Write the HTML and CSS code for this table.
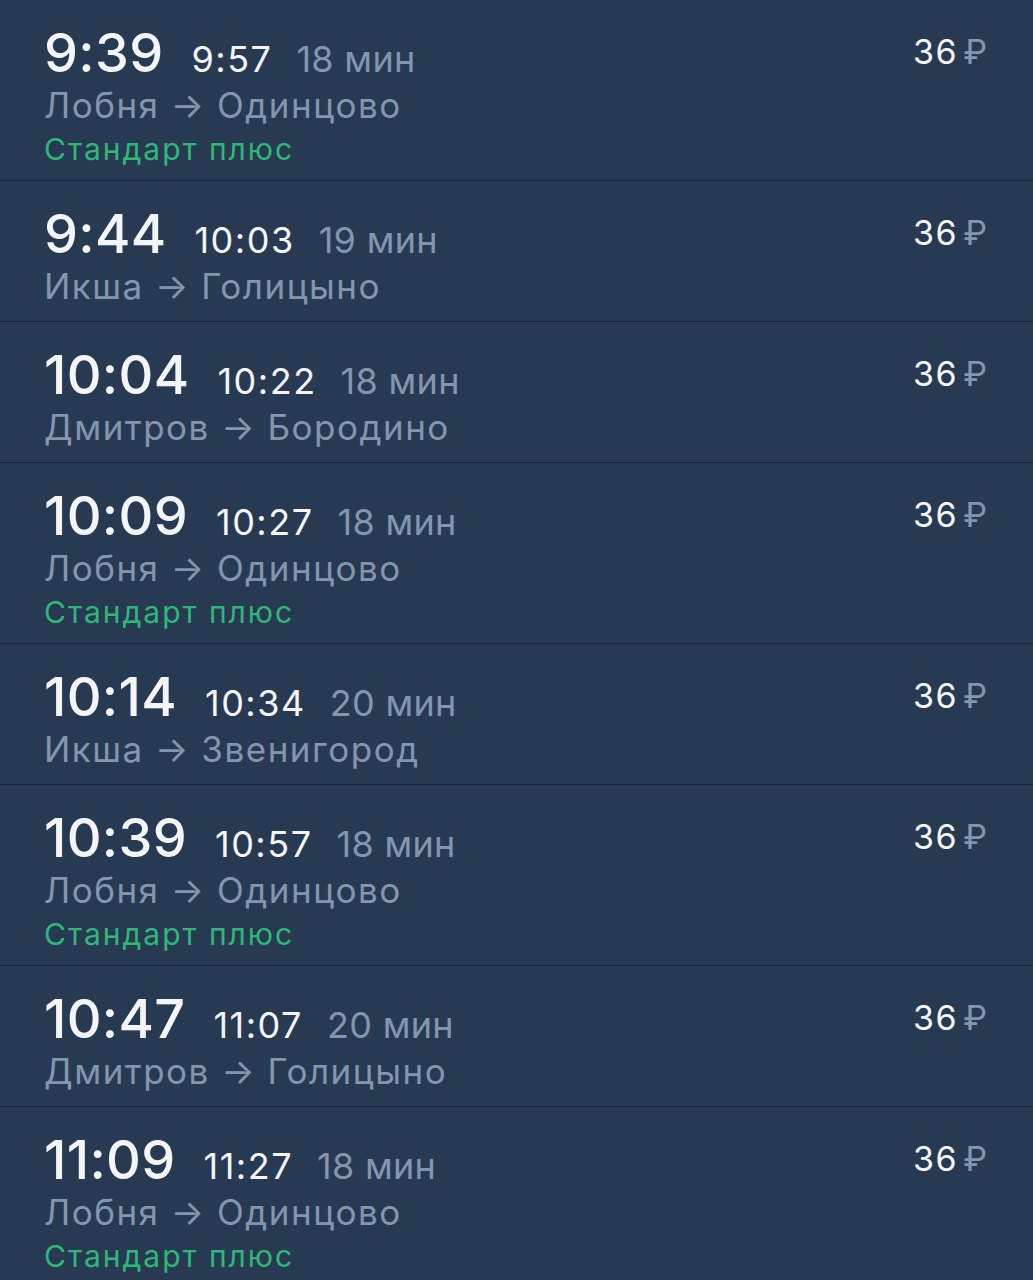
FILE: index.html
```html
<!DOCTYPE html>
<html lang="ru">
<head>
<meta charset="utf-8">
<link rel="stylesheet" href="styles.css">
</head>
<body>
<ul class="list">
  <li class="row">
    <div class="info">
      <div class="times"><span class="dep">9:39</span><span class="arr">9:57</span><span class="dur">18 мин</span></div>
      <div class="route">Лобня → Одинцово</div>
      <div class="tariff">Стандарт плюс</div>
    </div>
    <div class="price">36<span class="cur">₽</span></div>
  </li>
  <li class="row">
    <div class="info">
      <div class="times"><span class="dep">9:44</span><span class="arr">10:03</span><span class="dur">19 мин</span></div>
      <div class="route">Икша → Голицыно</div>
    </div>
    <div class="price">36<span class="cur">₽</span></div>
  </li>
  <li class="row">
    <div class="info">
      <div class="times"><span class="dep">10:04</span><span class="arr">10:22</span><span class="dur">18 мин</span></div>
      <div class="route">Дмитров → Бородино</div>
    </div>
    <div class="price">36<span class="cur">₽</span></div>
  </li>
  <li class="row">
    <div class="info">
      <div class="times"><span class="dep">10:09</span><span class="arr">10:27</span><span class="dur">18 мин</span></div>
      <div class="route">Лобня → Одинцово</div>
      <div class="tariff">Стандарт плюс</div>
    </div>
    <div class="price">36<span class="cur">₽</span></div>
  </li>
  <li class="row">
    <div class="info">
      <div class="times"><span class="dep">10:14</span><span class="arr">10:34</span><span class="dur">20 мин</span></div>
      <div class="route">Икша → Звенигород</div>
    </div>
    <div class="price">36<span class="cur">₽</span></div>
  </li>
  <li class="row">
    <div class="info">
      <div class="times"><span class="dep">10:39</span><span class="arr">10:57</span><span class="dur">18 мин</span></div>
      <div class="route">Лобня → Одинцово</div>
      <div class="tariff">Стандарт плюс</div>
    </div>
    <div class="price">36<span class="cur">₽</span></div>
  </li>
  <li class="row">
    <div class="info">
      <div class="times"><span class="dep">10:47</span><span class="arr">11:07</span><span class="dur">20 мин</span></div>
      <div class="route">Дмитров → Голицыно</div>
    </div>
    <div class="price">36<span class="cur">₽</span></div>
  </li>
  <li class="row">
    <div class="info">
      <div class="times"><span class="dep">11:09</span><span class="arr">11:27</span><span class="dur">18 мин</span></div>
      <div class="route">Лобня → Одинцово</div>
      <div class="tariff">Стандарт плюс</div>
    </div>
    <div class="price">36<span class="cur">₽</span></div>
  </li>
</ul>
</body>
</html>
```

FILE: styles.css
```css
html, body {
  margin: 0;
  padding: 0;
  background: #283a52;
}
body {
  font-family: Inter, "Noto Sans", "DejaVu Sans", sans-serif;
  color: #f3f5f8;
  height: 1280px;
  overflow: hidden;
}
.list {
  list-style: none;
  margin: 0;
  padding: 0;
}
.row {
  display: flex;
  justify-content: space-between;
  align-items: flex-start;
  padding: 25px 46px 11px 44px;
  border-bottom: 1px solid #1b2536;
}
.info {
  display: flex;
  flex-direction: column;
}
.times {
  display: flex;
  align-items: baseline;
  height: 56px;
  line-height: 56px;
}
.dep {
  font-size: 54px;
  font-weight: 500;
  letter-spacing: 0.3px;
}
.arr {
  font-size: 36px;
  margin-left: 28px;
  letter-spacing: 1.5px;
}
.dur {
  font-size: 36px;
  margin-left: 24px;
  color: #8495ae;
  letter-spacing: 0.3px;
}
.route {
  font-size: 35px;
  line-height: 48px;
  color: #8495ae;
  letter-spacing: 1.5px;
}
.tariff {
  font-size: 30px;
  line-height: 40px;
  color: #2eb878;
  letter-spacing: 2px;
}
.price {
  font-size: 34px;
  line-height: 40px;
  margin-top: 7px;
  display: flex;
  align-items: baseline;
  letter-spacing: 1.5px;
}
.cur {
  color: #8495ae;
  margin-left: 5px;
  letter-spacing: 0;
}
```
